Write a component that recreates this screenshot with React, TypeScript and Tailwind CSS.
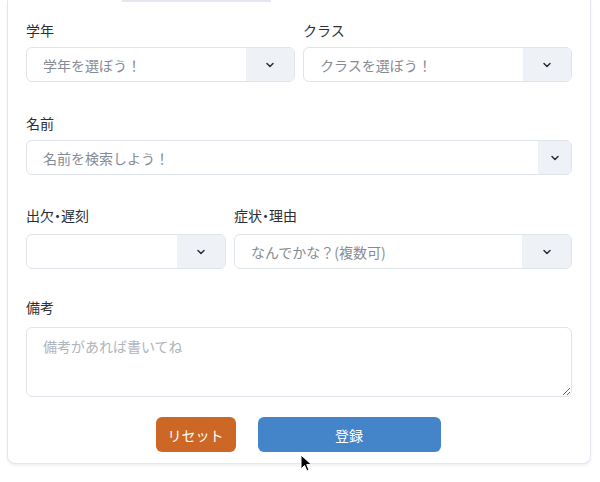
import { ChevronDown } from 'lucide-react';

const font = { fontFamily: '"Noto Sans CJK JP", "Noto Sans", sans-serif' };

interface SelectBoxProps {
  placeholder?: string;
  buttonClass?: string;
}

const SelectBox = ({ placeholder, buttonClass = 'w-12' }: SelectBoxProps) => (
  <div className="flex h-[35px] overflow-hidden rounded-md border border-[#dfe3ea] bg-white">
    <span className="flex flex-1 items-center pl-4 text-sm text-[#858b94]">{placeholder}</span>
    <div className={`flex items-center justify-center bg-[#eef1f6] ${buttonClass}`}>
      <ChevronDown size={12} strokeWidth={3} className="text-[#2a2f36]" />
    </div>
  </div>
);

const Label = ({ children, className = 'mb-[7px]' }: { children: string; className?: string }) => (
  <div className={`h-5 text-sm leading-5 text-[#2b2f35] ${className}`}>{children}</div>
);

export default function App() {
  return (
    <div className="relative min-h-[482px] bg-white pl-[7px] pr-[9px]" style={font}>
      <div className="rounded-b-lg border-x border-b border-[#e3e6ec] bg-white px-[18px] pb-[11px] shadow-[0_2px_3px_rgba(0,0,0,0.06)]">
        {/* cut-off element above */}
        <div className="ml-[96px] h-[2px] w-[149px] bg-[#e4e7f2]" />

        <div className="mt-[18px] grid grid-cols-2 gap-2">
          <div>
            <Label>学年</Label>
            <SelectBox placeholder="学年を選ぼう！" />
          </div>
          <div>
            <Label>クラス</Label>
            <SelectBox placeholder="クラスを選ぼう！" />
          </div>
        </div>

        <div className="mt-[31px]">
          <Label>名前</Label>
          <SelectBox placeholder="名前を検索しよう！" buttonClass="w-[33px]" />
        </div>

        <div className="mt-[30px] flex gap-2">
          <div className="w-[200px]">
            <Label className="mb-[9px] [font-feature-settings:'palt']">出欠・遅刻</Label>
            <SelectBox />
          </div>
          <div className="flex-1">
            <Label className="mb-[9px] [font-feature-settings:'palt']">症状・理由</Label>
            <SelectBox placeholder="なんでかな？(複数可)" buttonClass="w-[49px]" />
          </div>
        </div>

        <div className="mt-[28px]">
          <Label className="mb-[10px]">備考</Label>
          <textarea
            placeholder="備考があれば書いてね"
            className="block h-[70px] w-full resize-y rounded-md border border-[#dfe3ea] px-4 py-2 text-sm leading-5 outline-none placeholder:text-[#b0b4bb]"
            style={font}
          />
        </div>

        <div className="mt-[20px] flex justify-center gap-[22px] pr-[2px]">
          <button className="h-[35px] w-20 rounded-md bg-[#cd6726] text-sm text-white">リセット</button>
          <button className="h-[35px] w-[183px] rounded-md bg-[#4484c9] text-sm text-white">登録</button>
        </div>
      </div>

      {/* mouse cursor */}
      <svg className="absolute left-[300px] top-[454px]" width="13" height="19" viewBox="0 0 13 19">
        <path d="M1 1 L1 15 L4.5 11.5 L7 17 L9 16 L6.7 10.6 L11.5 10.6 Z" fill="#000" stroke="#fff" strokeWidth="1" />
      </svg>
    </div>
  );
}
